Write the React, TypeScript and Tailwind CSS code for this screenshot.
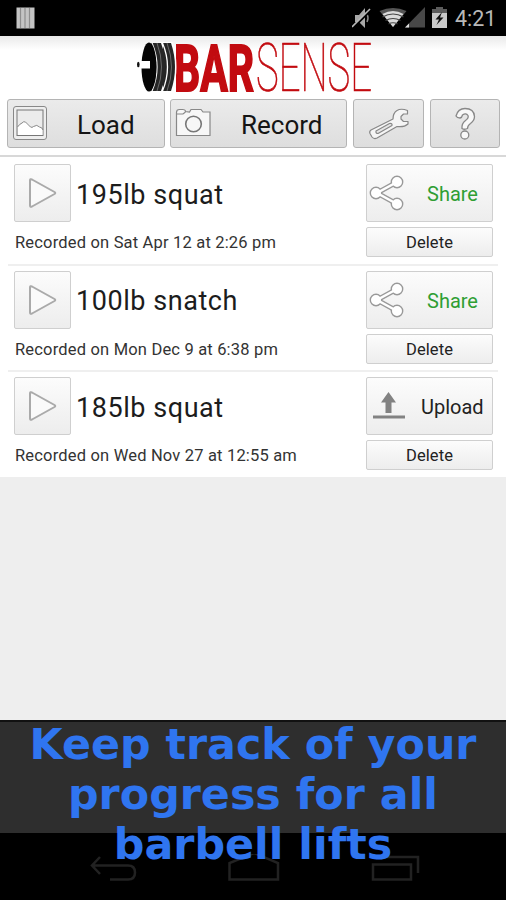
import { ReactNode } from "react";

type Lift = {
  title: string;
  date: string;
  uploaded: boolean;
};

const lifts: Lift[] = [
  { title: "195lb squat", date: "Sat Apr 12 at 2:26 pm", uploaded: true },
  { title: "100lb snatch", date: "Mon Dec 9 at 6:38 pm", uploaded: true },
  { title: "185lb squat", date: "Wed Nov 27 at 12:55 am", uploaded: false },
];

function StatusBar() {
  return (
    <div className="flex h-[36px] shrink-0 items-center justify-between bg-black pl-[16px] pr-[8px]">
      <svg width="19" height="22" viewBox="0 0 19 22">
        <path d="M.5 .5h18v21h-18z" fill="#c4c4c4" />
        <path d="M4.500 1v20M9 1v20M13.500 1v20" stroke="#8e8e8e" strokeWidth="1.200" />
      </svg>
      <div className="flex items-center">
        <svg width="98" height="24" viewBox="0 0 98 24">
          {/* muted */}
          <path d="M3 9h4l6-7v20l-6-6H3z" fill="#a8a8a8" />
          <path d="M15 8q2 4 0 8" fill="none" stroke="#8c8c8c" strokeWidth="1.500" />
          <path d="M1 22L19 4" stroke="#000" strokeWidth="2.200" />
          <path d="M0 21L18 3" stroke="#b8b8b8" strokeWidth="1.600" />
          {/* wifi */}
          <path d="M41 21L27.500 5Q41-1 54.500 5z" fill="#555" />
          <path d="M41 21L30.500 8Q41 2 51.500 8z" fill="#dadada" />
          <path d="M30.500 11q10.500-6 21 0M33.500 14.500q7.500-4 15 0M36.500 18q4.500-2.500 9 0" fill="none" stroke="#444" strokeWidth="1.200" />
          {/* signal */}
          <path d="M53 21.500L73 1v20.500z" fill="#484848" />
          <path d="M53 21.500l4-4v4z" fill="#ddd" />
          {/* battery */}
          <path d="M84 1h7v2h4v5H80V3h4z" fill="#5c5c5c" />
          <path d="M80 7h15v15H80z" fill="#c9c9c9" />
          <path d="M90 6l-6.500 7.500h3.500L84.500 19l7-7.500H88z" fill="#111" />
        </svg>
        <span className="ml-[5px] mt-[2px] w-[43px] whitespace-nowrap text-[21.500px] leading-none text-[#b8b8b8]">4:21</span>
      </div>
    </div>
  );
}

function Logo() {
  return (
    <svg className="ml-[136px] block overflow-visible" width="240" height="56" viewBox="136 40 240 56">
      <g fill="#c20b10" fontFamily="Roboto, sans-serif">
        <text x="174" y="90.500" fontSize="65.500" fontWeight="700" textLength="80" lengthAdjust="spacingAndGlyphs" stroke="#c20b10" strokeWidth="2">BAR</text>
        <text x="256" y="91" fontSize="66" fontWeight="100" textLength="116" lengthAdjust="spacingAndGlyphs" stroke="#c20b10" strokeWidth=".7">SENSE</text>
      </g>
      <path d="M160 42h12.500q8 25 0 50H160z" fill="#fff" />
      <path d="M163 43h8q8 24 0 48h-8z" fill="#262626" />
      <path d="M162.500 43q10 24 0 48" fill="none" stroke="#fff" strokeWidth="1.300" />
      <path d="M151 43h10q9 24 0 48h-10z" fill="#262626" />
      <path d="M157 43q9 24 0 48M167 43q9 24 0 48" fill="none" stroke="#999" strokeWidth=".6" />
      <path d="M152 43q10 24 0 48" fill="none" stroke="#fff" strokeWidth="1.300" />
      <ellipse cx="149" cy="67" rx="7.500" ry="24.500" fill="#050505" />
      <path d="M140 61h10v7.500h-10z" fill="#fff" />
      <ellipse cx="138.300" cy="64.500" rx="1.300" ry="2.800" fill="#111" />
    </svg>
  );
}

function ToolButton({ className, children }: { className: string; children: ReactNode }) {
  return (
    <button className={`flex h-[49px] items-center rounded-[3px] border-[1.500px] border-[#b4b4b4] bg-linear-to-b from-[#ebebeb] to-[#dedede] text-[26px] text-[#151515] ${className}`}>
      {children}
    </button>
  );
}

function Toolbar() {
  return (
    <div className="mt-[3px] flex pl-[7px]">
      <ToolButton className="w-[158px] pl-[4px]">
        <svg className="-mt-[1px]" width="36" height="36" viewBox="0 0 36 36" fill="none" stroke="#888">
          <rect x="1.500" y="1.500" width="33" height="33" rx="2.500" fill="#eee" />
          <rect x="5" y="5" width="26" height="25.500" fill="#ececec" stroke="#777" />
          <path d="M6 30V22q2-3 4.500-4 1.500-2 3.500-1l5 5q1.500 1 3-.5 3.500-2.500 6 .5 2 .5 2.500 3v5z" fill="#fff" stroke="none" />
          <path d="M5.500 22q2-3 4.500-4 1.500-2 3.500-1l5 5q1.500 1 3-.5 3.500-2.500 6 .5 3 .5 3.500 3" />
        </svg>
        <span className="ml-[29px] mt-[3px]">Load</span>
      </ToolButton>
      <ToolButton className="ml-[5px] w-[177px] pl-[4px]">
        <svg className="-mt-[2px]" width="37" height="30" viewBox="0 0 37 30" fill="#f7f7f7" stroke="#888" strokeWidth="1.200">
          <path d="M1.500 4.500q0-3 3-3h3q3 0 3 2l4 .5 1.500-2.500h10L28 4h7v23.500H1.500z" />
          <path d="M2 6h6l2.500-2" fill="none" />
          <circle cx="18.500" cy="16" r="7.800" stroke="#777" strokeWidth="1.600" />
        </svg>
        <span className="ml-[29px] mt-[3px]">Record</span>
      </ToolButton>
      <ToolButton className="ml-[6px] w-[71px] justify-center">
        <svg width="44" height="34" viewBox="0 0 44 34" fill="#f5f5f5" stroke="#888" strokeWidth="1.200" strokeLinejoin="round">
          <path d="M4 23L26 12Q26 6 30 3.500 34 1 40.500 3.500V7H36.500L34 9.500V12l2.500 2.500H41V17Q37 20.500 30 19.500L10 31q-3 1.500-5-1l-2-3.500Q2 24.500 4 23z" />
          <path d="M9 24L22.500 16.500q3-.5 2.500 2L11 26.500q-2.500 0-2-2.500z" fill="#e6e6e6" />
        </svg>
      </ToolButton>
      <ToolButton className="ml-[6px] w-[70px] justify-center">
        <svg width="24" height="34" viewBox="0 0 24 34" fill="#f8f8f8" stroke="#888" strokeWidth="1.300">
          <path d="M3 9Q5 1.500 12 1.500q9 0 9.500 8 0 4-4 7-3 2-3 5-3 1.500-5.500 0-.5-5 3.500-8 3.500-2.500 2.500-5-2-3-5.500-.5Q9 10.500 7 11 4 11 3 9z" />
          <circle cx="11.800" cy="28" r="4" />
        </svg>
      </ToolButton>
    </div>
  );
}

const buttonLook = "rounded-[2px] border-[1.500px] border-[#cfcfcf] bg-linear-to-b from-[#fcfcfc] to-[#ededed]";

function ShareIcon() {
  return (
    <svg className="ml-[2px]" width="38" height="38" viewBox="0 0 38 38" fill="#fff">
      <path d="M28 8L8 19l20 11" fill="none" stroke="#999" strokeWidth="5" />
      <g stroke="#999" strokeWidth="1.400">
        <circle cx="28" cy="8" r="5.700" />
        <circle cx="7" cy="19" r="5.700" />
        <circle cx="28" cy="30" r="5.700" />
      </g>
      <path d="M28 8L8 19l20 11" fill="none" stroke="#fff" strokeWidth="2.500" />
    </svg>
  );
}

function UploadIcon() {
  return (
    <svg className="ml-[5px]" width="34" height="28" viewBox="0 0 34 28" fill="#828282">
      <path d="M16.500 0L24 10.500h-4.500V21h-6V10.500H9z" />
      <path d="M1 23.500h32v3H1z" />
    </svg>
  );
}

function LiftRow({ lift }: { lift: Lift }) {
  return (
    <div className="flex h-[106.500px] justify-between pl-[14px] pr-[13px] pt-[7px]">
      <div>
        <div className="flex items-center">
          <button className={`flex h-[58px] w-[57px] items-center justify-center ${buttonLook}`}>
            <svg width="30" height="32" viewBox="0 0 30 32" fill="#fafafa" stroke="#aaa" strokeWidth="2" strokeLinejoin="round">
              <path d="M2 3.500q0-2 2-1L26.500 15q1.500 1 0 2L4 29.500q-2 1-2-1z" />
            </svg>
          </button>
          <h2 className="ml-[5px] mt-[4px] text-[27px] leading-none tracking-[.55px] text-[#1c1c1c]">{lift.title}</h2>
        </div>
        <p className="ml-[1px] mt-[11px] text-[16.500px] leading-[20px] tracking-[.18px] text-[#333]">Recorded on {lift.date}</p>
      </div>
      <div className="w-[127px]">
        <button className={`flex h-[58px] w-full items-center ${buttonLook}`}>
          {lift.uploaded ? <ShareIcon /> : <UploadIcon />}
          {lift.uploaded ? (
            <span className="ml-[20px] mt-[2px] text-[20px] text-[#2f9e33]">Share</span>
          ) : (
            <span className="ml-[15px] mt-[2px] text-[20px] text-[#222]">Upload</span>
          )}
        </button>
        <button className={`mt-[5px] flex h-[30px] w-full items-center justify-center pt-[3px] text-[16.500px] tracking-[.1px] text-[#222] ${buttonLook}`}>Delete</button>
      </div>
    </div>
  );
}

function Caption() {
  return (
    <div className="relative h-[180px] shrink-0 border-t-2 border-[#111] bg-black">
      <div className="h-[111px] bg-[#2e2e2e]" />
      <svg className="absolute left-0 top-[132px]" width="506" height="32" viewBox="0 0 506 32" fill="none" stroke="#222" strokeWidth="2.500">
        <path d="M100 3l-8 8.500 8 8.500M92 11.500h36q7 0 7 7t-7 7h-18" />
        <path d="M229.500 25.500V9L254-1l24 10v16.500z" />
        <path d="M373 10.500h38v15h-38zM387 3h31v16" />
      </svg>
      <p className="absolute inset-x-0 top-[-3px] text-center font-['DejaVu_Sans'] text-[42.800px] font-bold leading-[50px] text-[#2f75f0]">
        Keep track of your
        <br />
        progress for all
        <br />
        barbell lifts
      </p>
    </div>
  );
}

export default function App() {
  return (
    <div className="flex h-[900px] w-[506px] flex-col overflow-hidden bg-[#eee] font-[Roboto,sans-serif]">
      <StatusBar />
      <header className="h-[121px] shrink-0 border-b-2 border-[#d8d8d8] bg-white bg-linear-to-b from-[#e9e9e9] to-white to-[14px] pt-[4px]">
        <Logo />
        <Toolbar />
      </header>
      <main className="flex-1">
        <div className="bg-white">
          {lifts.map((lift, i) => (
            <div key={lift.title}>
              {i > 0 && <div className="mx-[8px] -mb-[2px] h-[2px] bg-[#efefef]" />}
              <LiftRow lift={lift} />
            </div>
          ))}
        </div>
      </main>
      <Caption />
    </div>
  );
}
